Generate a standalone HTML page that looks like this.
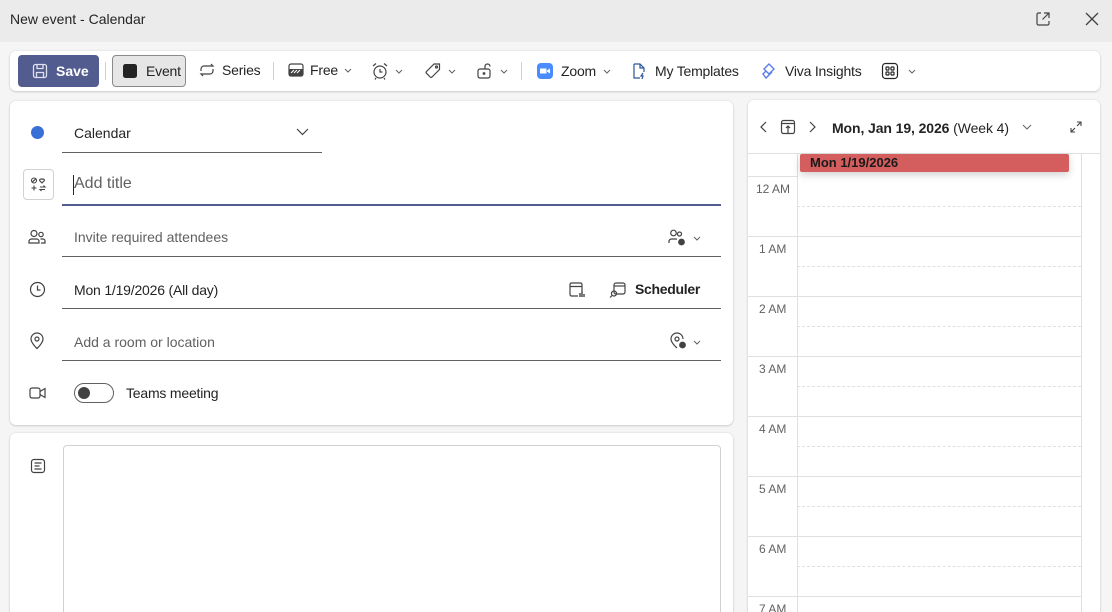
<!DOCTYPE html>
<html style="width:1112px;height:612px;overflow:hidden"><head><meta charset="utf-8"><style>
*{box-sizing:border-box;margin:0;padding:0}
body{width:1112px;height:612px;overflow:hidden;background:#f5f5f5;font-family:"Liberation Sans",sans-serif;color:#242424;position:relative;font-size:14px}
.a{position:absolute}
.tb{left:0;top:0;width:1112px;height:42px;background:#ebebeb}
.card{background:#fff;border-radius:6px;box-shadow:0 1px 2px rgba(0,0,0,.14),0 0 2px rgba(0,0,0,.1)}
.ti{display:flex;align-items:center;gap:6px;font-size:14px;white-space:nowrap;letter-spacing:-.2px}
.line{height:1px;background:#616161}
.ph{color:#616161;font-size:14px}
svg{display:block}
.hr{left:0;width:352px;height:1px;background:#e0e0e0}
.dash{left:49px;width:284px;border-top:1px dashed #e0e0e0}
.lbl{left:8px;font-size:12px;color:#616161}
</style></head><body>
<div class="a tb"></div>
<div class="a" style="left:10px;top:11px;font-size:14px;color:#242424">New event - Calendar</div>
<svg class="a" style="left:1035px;top:11px" width="16" height="16" viewBox="0 0 16 16" fill="none" stroke="#424242" stroke-width="1.2"><path d="M6 2H3.5A1.5 1.5 0 0 0 2 3.5v9A1.5 1.5 0 0 0 3.5 14h9a1.5 1.5 0 0 0 1.5-1.5V10M9 2h5v5M14 2L7.5 8.5"/></svg>
<svg class="a" style="left:1085px;top:12px" width="14" height="14" viewBox="0 0 14 14" stroke="#424242" stroke-width="1.3"><path d="M1 1l12 12M13 1L1 13"/></svg>

<div class="a card" style="left:10px;top:51px;width:1090px;height:40px"></div>
<div class="a" style="left:18px;top:55px;width:81px;height:32px;background:#525c8f;border-radius:4px;color:#fff;font-weight:bold;display:flex;align-items:center;padding-left:14px;gap:8px;font-size:14px">
<svg width="16" height="16" viewBox="0 0 16 16" fill="none" stroke="#dfe1ee" stroke-width="1.3"><rect x="1.5" y="1.5" width="13" height="13" rx="2"/><path d="M5 1.5v4h6v-4M4.5 14.5v-5h7v5"/></svg>Save</div>
<div class="a" style="left:105px;top:62px;width:1px;height:18px;background:#d1d1d1"></div>
<div class="a ti" style="left:112px;top:55px;width:74px;height:32px;background:#e6e6e6;border:1px solid #8a8a8a;border-radius:4px;padding-left:9px;gap:8px"><svg width="16" height="16"><rect x="1" y="1" width="14" height="14" rx="2.5" fill="#242424"/></svg>Event</div>
<div class="a ti" style="left:198px;top:62px"><svg width="18" height="16" viewBox="0 0 18 16" fill="none" stroke="#424242" stroke-width="1.2"><path d="M3 9V7a3 3 0 0 1 3-3h9l-2-2M15 7v2a3 3 0 0 1-3 3H3l2 2"/></svg>Series</div>
<div class="a" style="left:273px;top:62px;width:1px;height:18px;background:#d1d1d1"></div>
<div class="a ti" style="left:288px;top:62px"><svg width="16" height="16" viewBox="0 0 16 16"><rect x="1" y="2" width="14" height="12" rx="2" fill="none" stroke="#424242" stroke-width="1.2"/><rect x="1.5" y="7" width="13" height="6.5" fill="#424242"/><path d="M3 11l3-3M6 11l3-3M9 11l3-3" stroke="#fff"/></svg>Free <svg width="8" height="5" viewBox="0 0 8 5" fill="none" stroke="#616161"><path d="M1 1l3 3 3-3"/></svg></div>
<div class="a ti" style="left:371px;top:62px"><svg width="18" height="18" viewBox="0 0 18 18" fill="none" stroke="#424242" stroke-width="1.2"><circle cx="9" cy="10" r="6"/><path d="M9 7v3h2.5M2 4l3-2.5M16 4l-3-2.5M5 16l-1 1.5M13 16l1 1.5"/></svg><svg width="8" height="5" viewBox="0 0 8 5" fill="none" stroke="#616161"><path d="M1 1l3 3 3-3"/></svg></div>
<div class="a ti" style="left:424px;top:62px"><svg width="18" height="18" viewBox="0 0 18 18" fill="none" stroke="#424242" stroke-width="1.2"><path d="M10 2h5.5v5.5L8 15a1.3 1.3 0 0 1-1.8 0L2.5 11.3a1.3 1.3 0 0 1 0-1.8z"/><circle cx="12.5" cy="5" r="1"/></svg><svg width="8" height="5" viewBox="0 0 8 5" fill="none" stroke="#616161"><path d="M1 1l3 3 3-3"/></svg></div>
<div class="a ti" style="left:476px;top:62px"><svg width="18" height="18" viewBox="0 0 18 18" fill="none" stroke="#424242" stroke-width="1.2"><rect x="2" y="7" width="12" height="9" rx="2"/><path d="M9 7V4.5a2.5 2.5 0 0 1 5 0"/><circle cx="8" cy="11.5" r=".8" fill="#424242"/></svg><svg width="8" height="5" viewBox="0 0 8 5" fill="none" stroke="#616161"><path d="M1 1l3 3 3-3"/></svg></div>
<div class="a" style="left:521px;top:62px;width:1px;height:18px;background:#d1d1d1"></div>
<div class="a ti" style="left:536px;top:62px;gap:7px"><svg width="18" height="18"><rect x="1" y="1" width="16" height="16" rx="4" fill="#4a8cff"/><path d="M4 6.5h6.5v5H4zM11 8.5l3-2v5l-3-2z" fill="#fff"/></svg>Zoom <svg width="8" height="5" viewBox="0 0 8 5" fill="none" stroke="#616161"><path d="M1 1l3 3 3-3"/></svg></div>
<div class="a ti" style="left:631px;top:62px;gap:8px"><svg width="16" height="18" viewBox="0 0 16 18" fill="none" stroke="#2b5797" stroke-width="1.2"><path d="M3 2h6l4 4v4M9 2v4h4M3 2v14h6"/><path d="M12 11l-2 3h2l-1 3"/></svg>My Templates</div>
<div class="a ti" style="left:760px;top:62px;gap:7px"><svg width="18" height="18" viewBox="0 0 18 18" fill="none" stroke="#5b7de8" stroke-width="1.4"><path d="M9 2l5 5-5 5-5-5z"/><path d="M6 9l-3 3 3 4 6-6"/></svg>Viva Insights</div>
<div class="a ti" style="left:881px;top:62px;gap:9px"><svg width="18" height="18" viewBox="0 0 18 18" fill="none" stroke="#242424" stroke-width="1.2"><rect x="1.5" y="1.5" width="15" height="15" rx="3"/><rect x="5" y="5" width="3" height="3" rx=".8"/><rect x="10" y="5" width="3" height="3" rx=".8"/><rect x="5" y="10" width="3" height="3" rx=".8"/><rect x="10" y="10" width="3" height="3" rx=".8"/></svg><svg width="8" height="5" viewBox="0 0 8 5" fill="none" stroke="#616161"><path d="M1 1l3 3 3-3"/></svg></div>

<div class="a card" style="left:10px;top:101px;width:723px;height:324px"></div>
<div class="a" style="left:31px;top:126px;width:13px;height:13px;border-radius:50%;background:#3b6fd8"></div>
<div class="a" style="left:74px;top:125px">Calendar</div>
<svg class="a" style="left:296px;top:128px" width="13" height="8" viewBox="0 0 13 8" fill="none" stroke="#424242" stroke-width="1.2"><path d="M1 1l5.5 5.5L12 1"/></svg>
<div class="a line" style="left:62px;top:152px;width:260px"></div>

<div class="a" style="left:23px;top:169px;width:31px;height:31px;border:1px solid #d1d1d1;border-radius:4px"></div>
<svg class="a" style="left:30px;top:177px" width="17" height="15" viewBox="0 0 17 15" fill="none" stroke="#424242" stroke-width="1.1"><circle cx="4" cy="3.5" r="2.5"/><path d="M2.3 5.2l3.4-3.4M12 6l-2.3-2.3a1.4 1.4 0 0 1 2.3-1.4 1.4 1.4 0 0 1 2.3 1.4z"/><path d="M1.5 11h5M4 8.5v5M10 10h5l-1.5-1.5M15 12.5h-5l1.5 1.5"/></svg>
<div class="a" style="left:73px;top:175px;width:1px;height:20px;background:#242424"></div>
<div class="a ph" style="left:74px;top:175px;font-size:16px">Add title</div>
<div class="a" style="left:62px;top:204px;width:659px;height:2px;background:#525c8f"></div>

<svg class="a" style="left:28px;top:229px" width="18" height="16" viewBox="0 0 18 16" fill="none" stroke="#424242" stroke-width="1.2"><circle cx="6" cy="4.5" r="3"/><path d="M1 14v-1.5A2.5 2.5 0 0 1 3.5 10h5a2.5 2.5 0 0 1 2.5 2.5V14z"/><circle cx="13" cy="5.5" r="2.2"/><path d="M12.5 10h2.5a2 2 0 0 1 2 2v2h-4"/></svg>
<div class="a ph" style="left:74px;top:229px">Invite required attendees</div>
<svg class="a" style="left:668px;top:229px" width="20" height="18" viewBox="0 0 20 18" fill="none" stroke="#424242" stroke-width="1.2"><circle cx="5.5" cy="4" r="2.8"/><circle cx="11.5" cy="5" r="2"/><path d="M1 14v-1.5A2.5 2.5 0 0 1 3.5 10H9"/><circle cx="13.5" cy="13" r="2.8" fill="#424242"/></svg>
<svg class="a" style="left:693px;top:236px" width="8" height="5" viewBox="0 0 8 5" fill="none" stroke="#616161"><path d="M1 1l3 3 3-3"/></svg>
<div class="a line" style="left:62px;top:256px;width:659px"></div>

<svg class="a" style="left:29px;top:281px" width="17" height="17" viewBox="0 0 17 17" fill="none" stroke="#424242" stroke-width="1.2"><circle cx="8.5" cy="8.5" r="7"/><path d="M8.5 4.5v4.5h3"/></svg>
<div class="a" style="left:74px;top:282px;letter-spacing:-.2px">Mon 1/19/2026 (All day)</div>
<svg class="a" style="left:568px;top:281px" width="18" height="18" viewBox="0 0 18 18" fill="none" stroke="#424242" stroke-width="1.2"><path d="M10 15H3.5A1.5 1.5 0 0 1 2 13.5v-10A1.5 1.5 0 0 1 3.5 2h9A1.5 1.5 0 0 1 14 3.5V10M2 5.5h12"/><path d="M12 12v4M14 10v6M16 13v3" stroke-width="1.4"/></svg>
<svg class="a" style="left:609px;top:281px" width="18" height="18" viewBox="0 0 18 18" fill="none" stroke="#424242" stroke-width="1.2"><rect x="5" y="2" width="11" height="11" rx="2"/><path d="M5 5h11"/><circle cx="5" cy="12.5" r="2.5"/><path d="M3 14.5l-2 2"/></svg>
<div class="a" style="left:635px;top:281px;font-weight:bold;letter-spacing:-.3px">Scheduler</div>
<div class="a line" style="left:62px;top:308px;width:659px"></div>

<svg class="a" style="left:29px;top:332px" width="16" height="18" viewBox="0 0 16 18" fill="none" stroke="#424242" stroke-width="1.2"><path d="M8 16.5S2 11 2 7a6 6 0 0 1 12 0c0 4-6 9.5-6 9.5z"/><circle cx="8" cy="7" r="2"/></svg>
<div class="a ph" style="left:74px;top:334px">Add a room or location</div>
<svg class="a" style="left:669px;top:332px" width="20" height="19" viewBox="0 0 20 19" fill="none" stroke="#424242" stroke-width="1.2"><path d="M8 16S2 11 2 7a6 6 0 0 1 12 0"/><circle cx="8" cy="7" r="2"/><circle cx="13.5" cy="13" r="2.8" fill="#424242"/></svg>
<svg class="a" style="left:693px;top:340px" width="8" height="5" viewBox="0 0 8 5" fill="none" stroke="#616161"><path d="M1 1l3 3 3-3"/></svg>
<div class="a line" style="left:62px;top:360px;width:659px"></div>

<svg class="a" style="left:29px;top:386px" width="18" height="14" viewBox="0 0 18 14" fill="none" stroke="#424242" stroke-width="1.2"><rect x="1" y="2" width="10" height="10" rx="2"/><path d="M11 5.5l5-3v9l-5-3"/></svg>
<div class="a" style="left:74px;top:383px;width:40px;height:20px;border:1px solid #616161;border-radius:10px"><div style="position:absolute;left:3px;top:3px;width:12px;height:12px;border-radius:50%;background:#424242"></div></div>
<div class="a" style="left:126px;top:385px;letter-spacing:-.2px">Teams meeting</div>

<div class="a card" style="left:10px;top:433px;width:723px;height:240px"></div>
<svg class="a" style="left:30px;top:458px" width="16" height="16" viewBox="0 0 16 16" fill="none" stroke="#424242" stroke-width="1.2"><rect x="1.5" y="1.5" width="13" height="13" rx="2.5"/><path d="M4.5 5h7M4.5 8h5M4.5 11h7"/></svg>
<div class="a" style="left:63px;top:445px;width:658px;height:220px;border:1px solid #d1d1d1;border-radius:4px"></div>

<div class="a card" style="left:748px;top:100px;width:352px;height:560px;overflow:hidden">
<svg class="a" style="left:12px;top:21px" width="8" height="12" viewBox="0 0 8 12" fill="none" stroke="#424242" stroke-width="1.2"><path d="M6 1L1 6l5 5"/></svg>
<svg class="a" style="left:32px;top:19px" width="16" height="16" viewBox="0 0 16 16" fill="none" stroke="#424242" stroke-width="1.2"><rect x="1.5" y="1.5" width="13" height="13" rx="2"/><path d="M1.5 4.5h13M8 7v8M6 9l2-2 2 2"/></svg>
<svg class="a" style="left:60px;top:21px" width="8" height="12" viewBox="0 0 8 12" fill="none" stroke="#424242" stroke-width="1.2"><path d="M2 1l5 5-5 5"/></svg>
<div class="a" style="left:84px;top:20px;font-size:14px;white-space:nowrap;letter-spacing:-.1px"><b>Mon, Jan 19, 2026</b> (Week 4)</div>
<svg class="a" style="left:274px;top:24px" width="10" height="6" viewBox="0 0 10 6" fill="none" stroke="#616161"><path d="M1 1l4 4 4-4"/></svg>
<svg class="a" style="left:322px;top:21px" width="12" height="12" viewBox="0 0 12 12" fill="none" stroke="#424242" stroke-width="1.1"><path d="M7 1h4v4M11 1L7 5M5 11H1V7M1 11l4-4"/></svg>
<div class="a hr" style="top:53px"></div>
<div class="a" style="left:0;top:76px;width:49px;height:1px;background:#e0e0e0"></div>
<div class="a" style="left:49px;top:53px;width:1px;height:520px;background:#e0e0e0"></div>
<div class="a" style="left:333px;top:53px;width:1px;height:520px;background:#e0e0e0"></div>
<div class="a" style="left:52px;top:54px;width:269px;height:18px;background:#d45d5d;border-radius:2px;box-shadow:0 3px 8px rgba(0,0,0,.18);font-size:13px;font-weight:bold;color:#1a1a1a;padding:1px 0 0 10px">Mon 1/19/2026</div>
<div class="a lbl" style="top:82px">12 AM</div>
<div class="a dash" style="top:106px"></div>
<div class="a hr" style="top:136px;width:334px"></div>
<div class="a lbl" style="top:142px;left:11px">1 AM</div>
<div class="a dash" style="top:166px"></div>
<div class="a hr" style="top:196px;width:334px"></div>
<div class="a lbl" style="top:202px;left:11px">2 AM</div>
<div class="a dash" style="top:226px"></div>
<div class="a hr" style="top:256px;width:334px"></div>
<div class="a lbl" style="top:262px;left:11px">3 AM</div>
<div class="a dash" style="top:286px"></div>
<div class="a hr" style="top:316px;width:334px"></div>
<div class="a lbl" style="top:322px;left:11px">4 AM</div>
<div class="a dash" style="top:346px"></div>
<div class="a hr" style="top:376px;width:334px"></div>
<div class="a lbl" style="top:382px;left:11px">5 AM</div>
<div class="a dash" style="top:406px"></div>
<div class="a hr" style="top:436px;width:334px"></div>
<div class="a lbl" style="top:442px;left:11px">6 AM</div>
<div class="a dash" style="top:466px"></div>
<div class="a hr" style="top:496px;width:334px"></div>
<div class="a lbl" style="top:502px;left:11px">7 AM</div>
</div>
</body></html>
